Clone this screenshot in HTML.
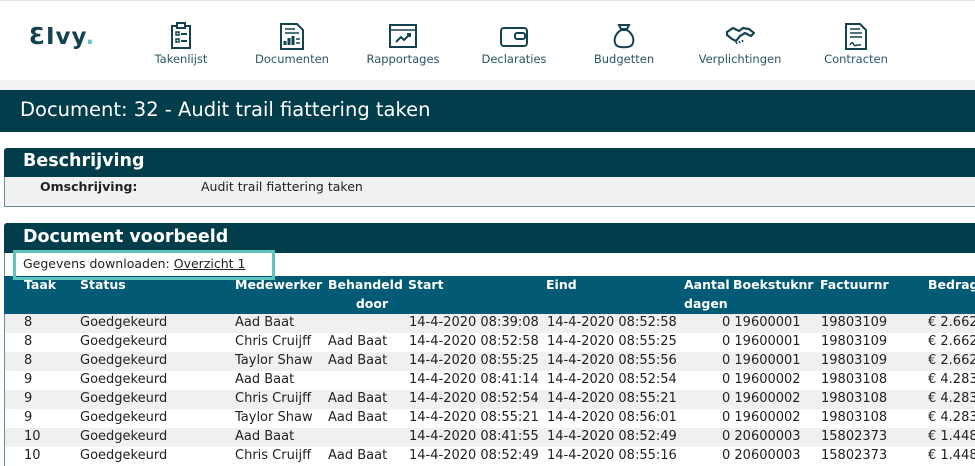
<!DOCTYPE html>
<html><head><meta charset="utf-8"><style>
*{margin:0;padding:0;box-sizing:border-box}
body{width:975px;height:463px;overflow:hidden;background:#fff;font-family:"DejaVu Sans","Liberation Sans",sans-serif;font-size:13px;color:#222;position:relative}
.nav{position:absolute;left:0;top:0;width:975px;height:80px;background:#fff;box-shadow:0 2px 4px rgba(0,0,0,.25);border-top:1px solid #e6e6e6}
.gap{position:absolute;left:0;top:80px;width:975px;height:10px;background:#f3f3f3}
.logo{position:absolute;left:29px;top:23px;font-family:"DejaVu Sans",sans-serif;font-weight:bold;font-size:23px;color:#12434f;letter-spacing:1px}
.logo span{color:#5cc8c4}
.ni{position:absolute;top:21px;text-align:center;color:#2d5560;font-size:11.5px}
.ni svg{display:block;margin:0 auto 2px;height:28px}
.title{position:absolute;left:0;top:90px;width:975px;height:42px;background:#023d4b;color:#fff;font-size:19.5px;padding:8px 0 0 20px}
.ph{position:absolute;left:4px;width:971px;background:#023d4b;color:#fff;font-family:"DejaVu Sans",sans-serif;font-weight:bold;font-size:17.5px;padding-left:19px;border-radius:3px 0 0 0}
.pb{position:absolute;left:4px;width:971px;background:#f1f1f1;border:1px solid #6a8c96;border-top:none;border-right:none}
.th{position:absolute;left:4px;top:276px;width:971px;height:38px;background:#025a74;color:#fff;font-weight:bold;font-size:12.5px}
.th div,.r div{position:absolute;white-space:nowrap}
.r{position:absolute;left:4px;width:971px;height:19px;border-left:1px solid #6a8c96}
.r div{top:1px}
.g{background:#f0f0f0}
</style></head><body>
<div class="nav">
<div class="logo">ƐIvy<span>.</span></div>
<div class="ni" style="left:150px;width:62px"><svg viewBox="0 0 24 28" width="24"><rect x="3" y="4" width="18" height="22" fill="none" stroke="#12434f" stroke-width="2"/><rect x="8" y="1" width="8" height="5" fill="#fff" stroke="#12434f" stroke-width="2"/><rect x="7" y="10" width="3" height="3" fill="none" stroke="#12434f" stroke-width="1.5"/><rect x="7" y="17" width="3" height="3" fill="none" stroke="#12434f" stroke-width="1.5"/><path d="M12 12h6M12 19h6" stroke="#12434f" stroke-width="2"/></svg>Takenlijst</div>
<div class="ni" style="left:250px;width:84px"><svg viewBox="0 0 26 28" width="26"><path d="M2 2h16l6 6v19H2z" fill="none" stroke="#12434f" stroke-width="2"/><path d="M6 7h10M6 11h14" stroke="#12434f" stroke-width="1.5"/><path d="M6 23v-4M10 23v-7M14 23v-9" stroke="#12434f" stroke-width="3"/><path d="M17 17h4M17 21h4" stroke="#12434f" stroke-width="1.5"/></svg>Documenten</div>
<div class="ni" style="left:361px;width:84px"><svg viewBox="0 0 30 28" width="30"><rect x="2" y="3" width="26" height="22" fill="none" stroke="#12434f" stroke-width="2"/><path d="M2 8h26" stroke="#12434f" stroke-width="1.5"/><path d="M8 20l5-5 3 3 6-6m-3 0h3v3" fill="none" stroke="#12434f" stroke-width="2"/></svg>Rapportages</div>
<div class="ni" style="left:478px;width:72px"><svg viewBox="0 0 30 28" width="30"><rect x="2" y="6" width="26" height="18" rx="3" fill="none" stroke="#12434f" stroke-width="2"/><rect x="16" y="11" width="10" height="6" rx="2" fill="none" stroke="#12434f" stroke-width="2"/></svg>Declaraties</div>
<div class="ni" style="left:588px;width:72px"><svg viewBox="0 0 26 28" width="26"><path d="M8 3l2 4h6l2-4zM10 8C4 12 2 18 5 23c3 3 13 3 16 0 3-5 1-11-5-15z" fill="none" stroke="#12434f" stroke-width="2"/></svg>Budgetten</div>
<div class="ni" style="left:693px;width:94px"><svg viewBox="0 0 30 28" width="30"><path d="M2 10l6-4 6 3 4-3 6 1 5 4-3 3-6-3-5 3-4 5-4-2-5-4z" fill="none" stroke="#12434f" stroke-width="2.2"/><path d="M11 20l1 2M14 19l1 2M17 18l1 2" stroke="#12434f" stroke-width="1.5"/></svg>Verplichtingen</div>
<div class="ni" style="left:819px;width:74px"><svg viewBox="0 0 26 28" width="26"><path d="M3 2h14l6 6v19H3z" fill="none" stroke="#12434f" stroke-width="2"/><path d="M7 7h10M7 11h12M7 15h12" stroke="#12434f" stroke-width="1.5"/><path d="M7 23c2-4 3-2 4 0s3-1 7 0" fill="none" stroke="#12434f" stroke-width="1.5"/></svg>Contracten</div>
</div>
<div class="gap"></div>
<div class="title">Document: 32 - Audit trail fiattering taken</div>

<div class="ph" style="top:148px;height:29px;padding-top:3px">Beschrijving</div>
<div class="pb" style="top:177px;height:30px"><div style="position:absolute;left:35px;top:2px;font-weight:bold;font-size:12.5px">Omschrijving:</div><div style="position:absolute;left:196px;top:2px;font-size:12.5px">Audit trail fiattering taken</div></div>

<div class="ph" style="top:223px;height:30px;padding-top:4px">Document voorbeeld</div>
<div style="position:absolute;left:4px;top:253px;width:971px;height:23px;background:#fff;border-left:1px solid #6a8c96"></div>
<div style="position:absolute;left:23px;top:256px;font-size:12.5px">Gegevens downloaden: <u>Overzicht 1</u></div>
<div class="th">
<div style="left:20px;top:1px">Taak</div><div style="left:76px;top:1px">Status</div><div style="left:231px;top:1px">Medewerker</div><div style="left:324px;top:1px">Behandeld</div><div style="left:324px;top:20px;width:88px;text-align:center">door</div><div style="left:404px;top:1px">Start</div><div style="left:542px;top:1px">Eind</div><div style="left:680px;top:1px">Aantal</div><div style="left:680px;top:20px">dagen</div><div style="left:729px;top:1px">Boekstuknr</div><div style="left:816px;top:1px">Factuurnr</div><div style="left:924px;top:1px">Bedrag</div>
</div>
<div style="position:absolute;left:13px;top:250px;width:262px;height:30px;border:3px solid #5fc4c0"></div>

<div class="r g" style="top:314px"><div style="left:19px">8</div><div style="left:75px">Goedgekeurd</div><div style="left:230px">Aad Baat</div><div style="left:404px">14-4-2020 08:39:08</div><div style="left:542px">14-4-2020 08:52:58</div><div style="left:717px">0 19600001</div><div style="left:816px">19803109</div><div style="left:923px">€ 2.662</div></div>
<div class="r" style="top:333px"><div style="left:19px">8</div><div style="left:75px">Goedgekeurd</div><div style="left:230px">Chris Cruijff</div><div style="left:323px">Aad Baat</div><div style="left:404px">14-4-2020 08:52:58</div><div style="left:542px">14-4-2020 08:55:25</div><div style="left:717px">0 19600001</div><div style="left:816px">19803109</div><div style="left:923px">€ 2.662</div></div>
<div class="r g" style="top:352px"><div style="left:19px">8</div><div style="left:75px">Goedgekeurd</div><div style="left:230px">Taylor Shaw</div><div style="left:323px">Aad Baat</div><div style="left:404px">14-4-2020 08:55:25</div><div style="left:542px">14-4-2020 08:55:56</div><div style="left:717px">0 19600001</div><div style="left:816px">19803109</div><div style="left:923px">€ 2.662</div></div>
<div class="r" style="top:371px"><div style="left:19px">9</div><div style="left:75px">Goedgekeurd</div><div style="left:230px">Aad Baat</div><div style="left:404px">14-4-2020 08:41:14</div><div style="left:542px">14-4-2020 08:52:54</div><div style="left:717px">0 19600002</div><div style="left:816px">19803108</div><div style="left:923px">€ 4.283</div></div>
<div class="r g" style="top:390px"><div style="left:19px">9</div><div style="left:75px">Goedgekeurd</div><div style="left:230px">Chris Cruijff</div><div style="left:323px">Aad Baat</div><div style="left:404px">14-4-2020 08:52:54</div><div style="left:542px">14-4-2020 08:55:21</div><div style="left:717px">0 19600002</div><div style="left:816px">19803108</div><div style="left:923px">€ 4.283</div></div>
<div class="r" style="top:409px"><div style="left:19px">9</div><div style="left:75px">Goedgekeurd</div><div style="left:230px">Taylor Shaw</div><div style="left:323px">Aad Baat</div><div style="left:404px">14-4-2020 08:55:21</div><div style="left:542px">14-4-2020 08:56:01</div><div style="left:717px">0 19600002</div><div style="left:816px">19803108</div><div style="left:923px">€ 4.283</div></div>
<div class="r g" style="top:428px"><div style="left:19px">10</div><div style="left:75px">Goedgekeurd</div><div style="left:230px">Aad Baat</div><div style="left:404px">14-4-2020 08:41:55</div><div style="left:542px">14-4-2020 08:52:49</div><div style="left:717px">0 20600003</div><div style="left:816px">15802373</div><div style="left:923px">€ 1.448</div></div>
<div class="r" style="top:447px"><div style="left:19px">10</div><div style="left:75px">Goedgekeurd</div><div style="left:230px">Chris Cruijff</div><div style="left:323px">Aad Baat</div><div style="left:404px">14-4-2020 08:52:49</div><div style="left:542px">14-4-2020 08:55:16</div><div style="left:717px">0 20600003</div><div style="left:816px">15802373</div><div style="left:923px">€ 1.448</div></div>
</body></html>
